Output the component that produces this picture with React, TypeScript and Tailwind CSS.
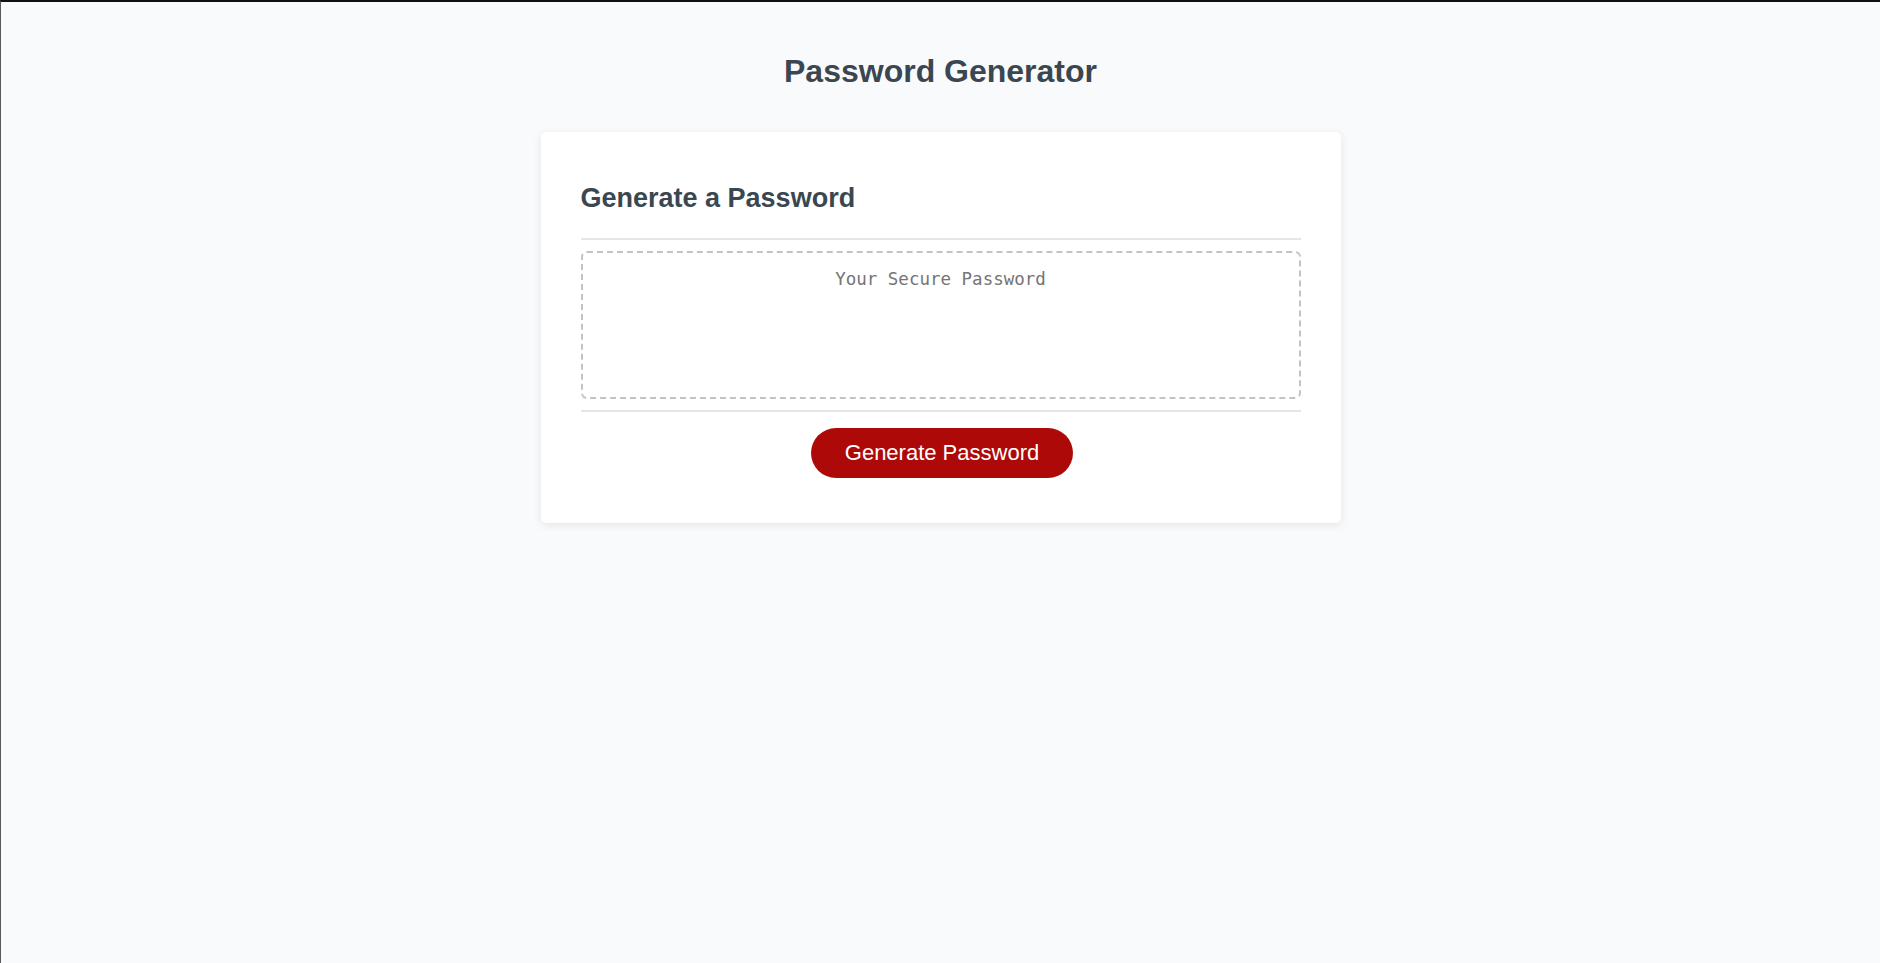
import { useState } from "react";

// characters the generator draws from
const CHARS = "abcdefghijklmnopqrstuvwxyzABCDEFGHIJKLMNOPQRSTUVWXYZ0123456789!@#$%^&*()";

export default function App() {
  const [password, setPassword] = useState("");

  const generate = () => {
    let out = "";
    for (let i = 0; i < 16; i++) {
      out += CHARS[Math.floor(Math.random() * CHARS.length)];
    }
    setPassword(out);
  };

  return (
    <div
      className="min-h-[963px] bg-[#f9fafc] border-t-2 border-t-[#111111] border-l border-l-[#5a5a5a] text-[#3a4751]"
      style={{ fontFamily: '"Liberation Sans", Arial, sans-serif' }}
    >
      {/* Page title */}
      <h1 className="pt-[51px] text-center text-[32px] leading-[36px] font-bold">
        Password Generator
      </h1>

      {/* Card */}
      <div className="mx-auto mt-[43px] w-[800px] rounded-[5px] bg-white px-10 pt-[51px] pb-[45px] shadow-[0_2px_10px_rgba(0,0,0,0.09)]">
        <h2 className="text-[27px] leading-[31px] font-bold">Generate a Password</h2>

        <div className="mt-6 h-[2px] bg-[#e6e6e6]" />

        <div className="mt-[11px]">
          <textarea
            readOnly
            value={password}
            placeholder="Your Secure Password"
            className="block h-[148px] w-full resize-none rounded-[6px] border-2 border-dashed border-[#c0c4ca] bg-white px-4 pt-4 text-center text-[17.5px] leading-[20px] text-[#3a4751] outline-none placeholder:text-[#757575]"
            style={{ fontFamily: '"DejaVu Sans Mono", monospace' }}
          />
        </div>

        <div className="mt-[11px] h-[2px] bg-[#e6e6e6]" />

        <div className="mt-4 flex justify-center pl-[3px]">
          <button
            onClick={generate}
            className="flex h-[50px] items-center rounded-full bg-[#ae0909] px-[34px] text-[22px] leading-[26px] text-white"
          >
            Generate Password
          </button>
        </div>
      </div>
    </div>
  );
}
